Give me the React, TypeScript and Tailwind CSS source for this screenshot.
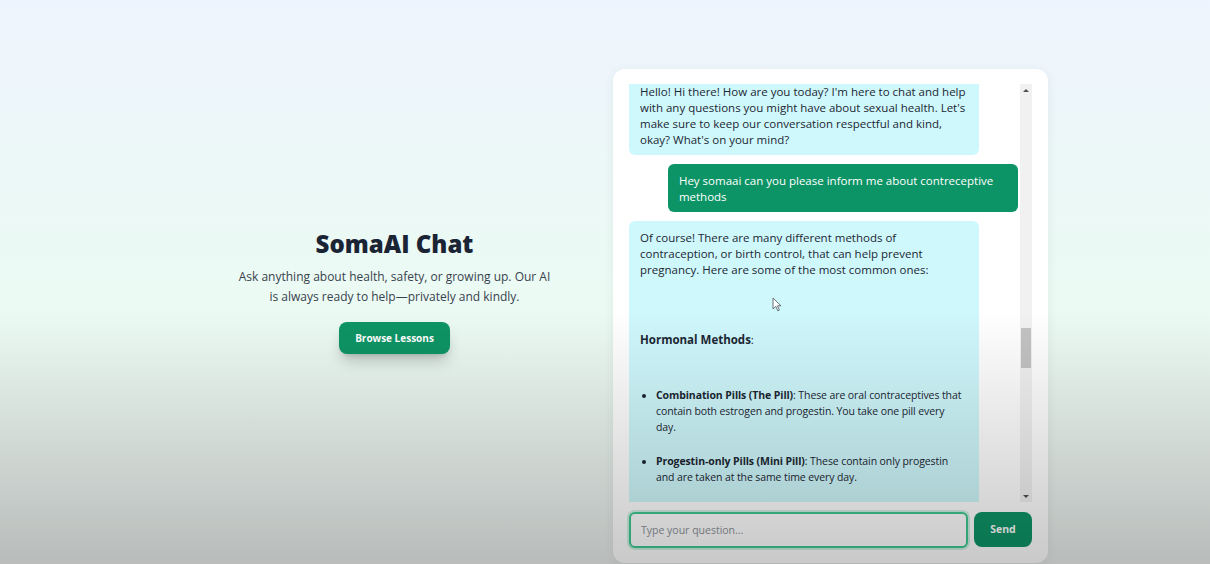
import React from 'react'

function Bubble({ mine, children }: { mine?: boolean; children: React.ReactNode }) {
  return (
    <div
      className={
        mine
          ? 'self-end w-[90%] rounded-md bg-[#0c9466] px-[11px] pt-[9px] pb-[7px] text-white'
          : 'self-start w-[90%] rounded-md bg-[#cff8fc] px-[11px] pt-[9px] pb-[7px] text-[#1c2733]'
      }
    >
      {children}
    </div>
  )
}

function ScrollBar() {
  return (
    <div className="flex w-3 flex-col bg-[#f1f1f1]">
      <div className="flex h-3 items-center justify-center">
        <div className="h-0 w-0 border-x-[3px] border-b-[3px] border-x-transparent border-b-[#505050]" />
      </div>
      <div className="h-[232px]" />
      <div className="mx-[1px] h-[40px] bg-[#c3c3c3]" />
      <div className="flex-1" />
      <div className="flex h-3 items-center justify-center">
        <div className="h-0 w-0 border-x-[3px] border-t-[3px] border-x-transparent border-t-[#505050]" />
      </div>
    </div>
  )
}

export default function App() {
  return (
    <div className="relative h-[564px] overflow-hidden bg-linear-to-b from-[#eef4fd] via-[#ebfbf3] via-55% to-[#eaeeec] font-['Open_Sans',sans-serif]">
      <div className="flex pl-[176px] pt-[69px]">
        <section className="flex w-[437px] flex-col items-center pt-[159px] text-center">
          <h1 className="text-[24px] leading-8 font-extrabold text-[#1b2434]">SomaAI Chat</h1>
          <p className="mt-[7px] w-[314px] text-[12px] leading-5 text-[#38424e]">
            Ask anything about health, safety, or growing up. Our AI is always ready to help—privately and kindly.
          </p>
          <button className="mt-[15px] h-8 rounded-lg bg-[#0d9465] px-4 text-[10px] font-bold text-white shadow-lg shadow-black/20">
            Browse Lessons
          </button>
        </section>

        <section className="flex h-[494px] w-[435px] flex-col rounded-xl bg-white px-4 pt-[15px] pb-[15px] shadow-[0_2px_12px_rgba(0,0,0,0.06)]">
          <div className="flex h-[418px] gap-0.5">
            <div className="flex-1 overflow-hidden text-[11.5px] leading-4">
              <div className="-mt-[9px] flex flex-col gap-[9px]">
                <Bubble>
                  <p>
                    Hello! Hi there! How are you today? I'm here to chat and help with any questions you might have
                    about sexual health. Let's make sure to keep our conversation respectful and kind, okay? What's on
                    your mind?
                  </p>
                </Bubble>
                <Bubble mine>
                  <p>Hey somaai can you please inform me about contreceptive methods</p>
                </Bubble>
                <Bubble>
                  <p>
                    Of course! There are many different methods of contraception, or birth control, that can help
                    prevent pregnancy. Here are some of the most common ones:
                  </p>
                  <p className="mt-[54px]">
                    <strong>Hormonal Methods</strong>:
                  </p>
                  <ul className="mt-[39px] flex list-disc flex-col gap-[18px] pl-4 text-[10.5px] tracking-[-0.1px]">
                    <li>
                      <strong>Combination Pills (The Pill)</strong>: These are oral contraceptives that contain both
                      estrogen and progestin. You take one pill every
                      <br />
                      day.
                    </li>
                    <li>
                      <strong>Progestin-only Pills (Mini Pill)</strong>: These contain only progestin and are taken at
                      the same time every day.
                    </li>
                    <li>
                      <strong>Birth Control Patch</strong>: A small patch worn on the skin that releases hormones into
                      the body.
                    </li>
                  </ul>
                </Bubble>
              </div>
            </div>
            <ScrollBar />
          </div>

          <div className="mt-2.5 flex h-9 gap-1.5">
            <input
              type="text"
              placeholder="Type your question..."
              className="h-9 flex-1 rounded-md border-2 border-[#3dc98f] bg-white px-2.5 text-[10.5px] leading-4 text-[#1f2933] shadow-[0_0_0_2px_rgba(61,201,143,0.25)] outline-none placeholder:text-[#8a9096]"
            />
            <button className="h-[35px] w-[58px] rounded-lg bg-[#0e9466] text-[10.5px] font-bold text-white">Send</button>
          </div>
        </section>
      </div>

      <svg className="absolute left-[772px] top-[297px]" width="10" height="15" viewBox="0 0 10 15">
        <path d="M1 1 L1 12 L3.8 9.4 L5.8 13.8 L7.4 13.1 L5.4 8.8 L9 8.8 Z" fill="#fff" stroke="#4a4f55" strokeWidth="0.8" />
      </svg>

      <div className="pointer-events-none absolute inset-0 bg-linear-to-b from-transparent from-55% to-[rgba(0,0,0,0.21)]" />
    </div>
  )
}
